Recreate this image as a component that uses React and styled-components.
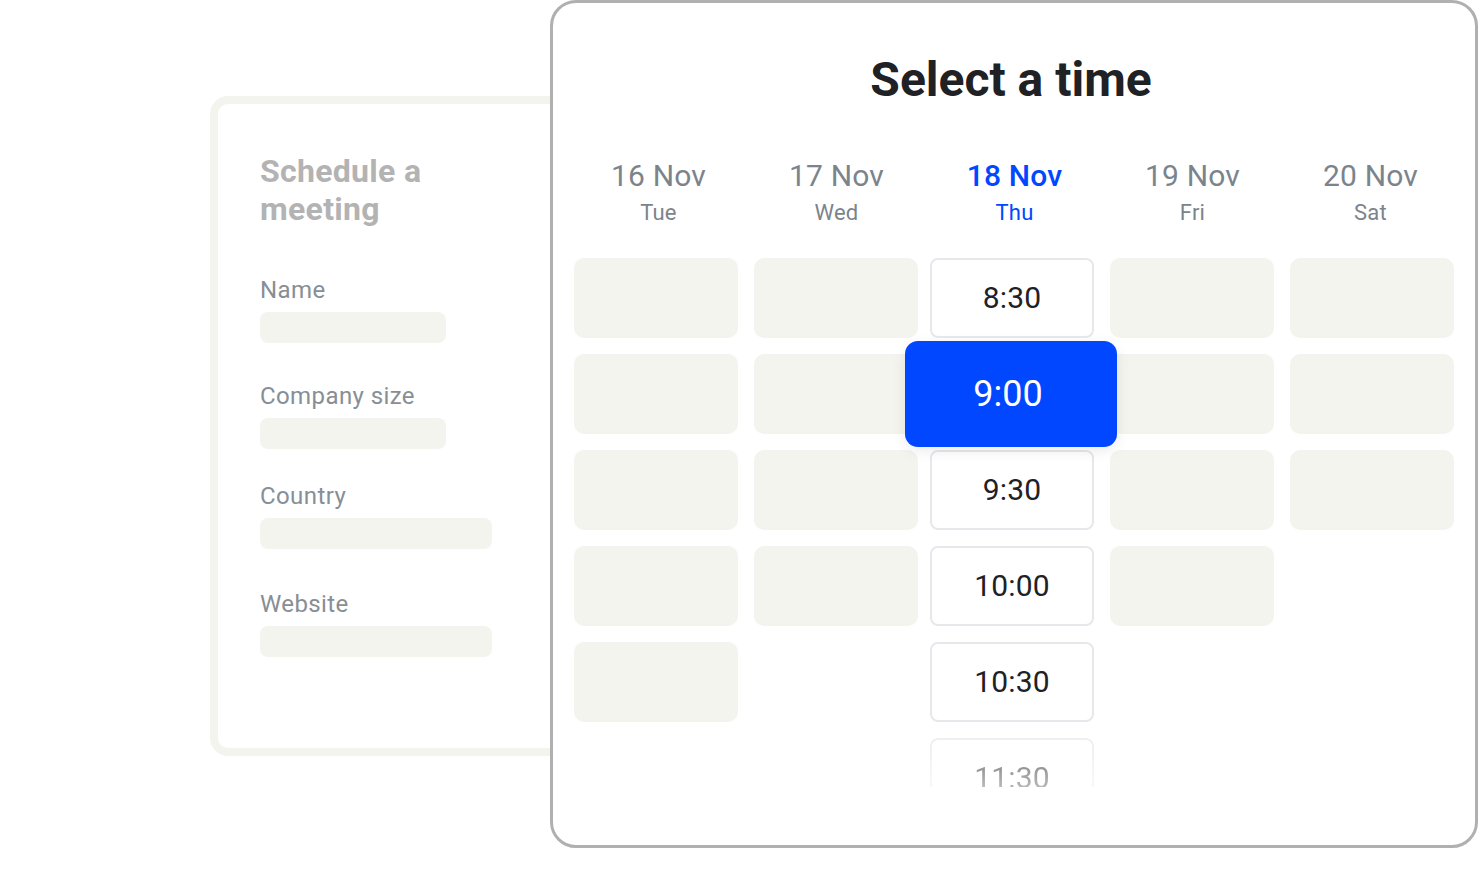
import React from 'react';

/* Styles */
import styled, { createGlobalStyle } from 'styled-components';

const GlobalStyle = createGlobalStyle`
   * { box-sizing: border-box; }
   body {
      margin: 0;
      background: #ffffff;
      font-family: Roboto, "Noto Sans", "Liberation Sans", sans-serif;
   }
`

const Stage = styled.div`
   display: flex;
   align-items: flex-start;
   padding-left: 210px;
   width: 1478px;
   height: 884px;
`

/* Form card behind */
const FormCard = styled.div`
   width: 420px;
   height: 660px;
   margin-top: 96px;
   border: 8px solid #f4f4ef;
   border-radius: 18px;
   padding: 48px 0 0 42px;
   background: #ffffff;
`

const FormTitle = styled.h2`
   margin: 0 0 48px;
   width: 210px;
   font-size: 32px;
   line-height: 38px;
   font-weight: 700;
   letter-spacing: 0.3px;
   color: #b3b3b3;
`

const Field = styled.div`
   display: flex;
   flex-direction: column;
   margin-top: ${p => p.$mt || 0}px;
`

const Label = styled.span`
   font-size: 24px;
   line-height: 28px;
   letter-spacing: 0.4px;
   color: #878e95;
   margin-bottom: 8px;
`

const Bar = styled.div`
   width: ${p => p.$w}px;
   height: 31px;
   border-radius: 8px;
   background: #f4f4ef;
`

/* Time picker card */
const PickerCard = styled.div`
   position: relative;
   z-index: 1;
   width: 928px;
   height: 848px;
   margin-left: -80px;
   border: 3.5px solid #b0b0b0;
   border-radius: 26px;
   background: #ffffff;
   padding: 49px 0 0 21px;
`

const Title = styled.h1`
   margin: 0 0 50px -21px;
   text-align: center;
   font-size: 48px;
   line-height: 56px;
   font-weight: 700;
   color: #202124;
   transform: translateX(-3px);
`

const HeaderRow = styled.div`
   display: flex;
   margin: 0 0 26px -4.5px;
`

const DayHead = styled.div`
   display: flex;
   flex-direction: column;
   align-items: center;
   width: 178px;
   color: ${p => (p.$active ? '#0047ff' : '#7b848c')};
`

const DateText = styled.span`
   font-size: 30px;
   line-height: 36px;
   letter-spacing: 0.2px;
   font-weight: ${p => (p.$active ? 500 : 400)};
`

const DayText = styled.span`
   font-size: 22px;
   line-height: 38px;
   letter-spacing: 0.2px;
`

const Columns = styled.div`
   display: flex;
   gap: 16px;
`

const Column = styled.div`
   display: flex;
   flex-direction: column;
   gap: 16px;
   width: 164px;
   margin-left: ${p => p.$shift || 0}px;
`

const Slot = styled.div`
   height: 80px;
   border-radius: 10px;
   background: #f4f4ef;
`

const TimeSlot = styled.div`
   height: 80px;
   border-radius: 8px;
   border: 2px solid #e6e8eb;
   background: #ffffff;
   display: flex;
   align-items: center;
   justify-content: center;
   padding-bottom: 2px;
   font-size: 30px;
   letter-spacing: 0.2px;
   color: #202124;
   ${p => p.$faded && `
      -webkit-mask-image: linear-gradient(to bottom, rgba(0,0,0,.7) 0, rgba(0,0,0,.32) 49px, transparent 49px);
      mask-image: linear-gradient(to bottom, rgba(0,0,0,.7) 0, rgba(0,0,0,.32) 49px, transparent 49px);
   `}
`

const SelectedSlot = styled.div`
   position: relative;
   z-index: 2;
   align-self: center;
   width: 212px;
   height: 106px;
   margin: -13px 0 -13px -2px;
   padding-right: 6px;
   border-radius: 13px;
   background: #0047ff;
   box-shadow: 0 4px 14px rgba(0, 0, 0, 0.08);
   display: flex;
   align-items: center;
   justify-content: center;
   font-size: 36px;
   color: #ffffff;
`

const days = [
   { date: '16 Nov', day: 'Tue', slots: 5 },
   { date: '17 Nov', day: 'Wed', slots: 4 },
   { date: '18 Nov', day: 'Thu', active: true },
   { date: '19 Nov', day: 'Fri', slots: 4 },
   { date: '20 Nov', day: 'Sat', slots: 3 },
]

const times = [
   { t: '8:30' },
   { t: '9:00', selected: true },
   { t: '9:30' },
   { t: '10:00' },
   { t: '10:30' },
   { t: '11:30', faded: true },
]

const App = () => {
   return (
      <>
         <GlobalStyle />
         <Stage>
            <FormCard>
               <FormTitle>Schedule a meeting</FormTitle>
               <Field>
                  <Label>Name</Label>
                  <Bar $w={186} />
               </Field>
               <Field $mt={39}>
                  <Label>Company size</Label>
                  <Bar $w={186} />
               </Field>
               <Field $mt={33}>
                  <Label>Country</Label>
                  <Bar $w={232} />
               </Field>
               <Field $mt={41}>
                  <Label>Website</Label>
                  <Bar $w={232} />
               </Field>
            </FormCard>

            <PickerCard>
               <Title>Select a time</Title>
               <HeaderRow>
                  {days.map(d => (
                     <DayHead key={d.date} $active={d.active}>
                        <DateText $active={d.active}>{d.date}</DateText>
                        <DayText>{d.day}</DayText>
                     </DayHead>
                  ))}
               </HeaderRow>
               <Columns>
                  {days.map((d, i) => (
                     <Column key={d.date} $shift={i === 2 ? -4 : 0}>
                        {d.active
                           ? times.map(s =>
                                s.selected ? (
                                   <SelectedSlot key={s.t}>{s.t}</SelectedSlot>
                                ) : (
                                   <TimeSlot key={s.t} $faded={s.faded}>{s.t}</TimeSlot>
                                )
                             )
                           : Array.from({ length: d.slots }).map((_, j) => <Slot key={j} />)}
                     </Column>
                  ))}
               </Columns>
            </PickerCard>
         </Stage>
      </>
   )
}

export default App;
